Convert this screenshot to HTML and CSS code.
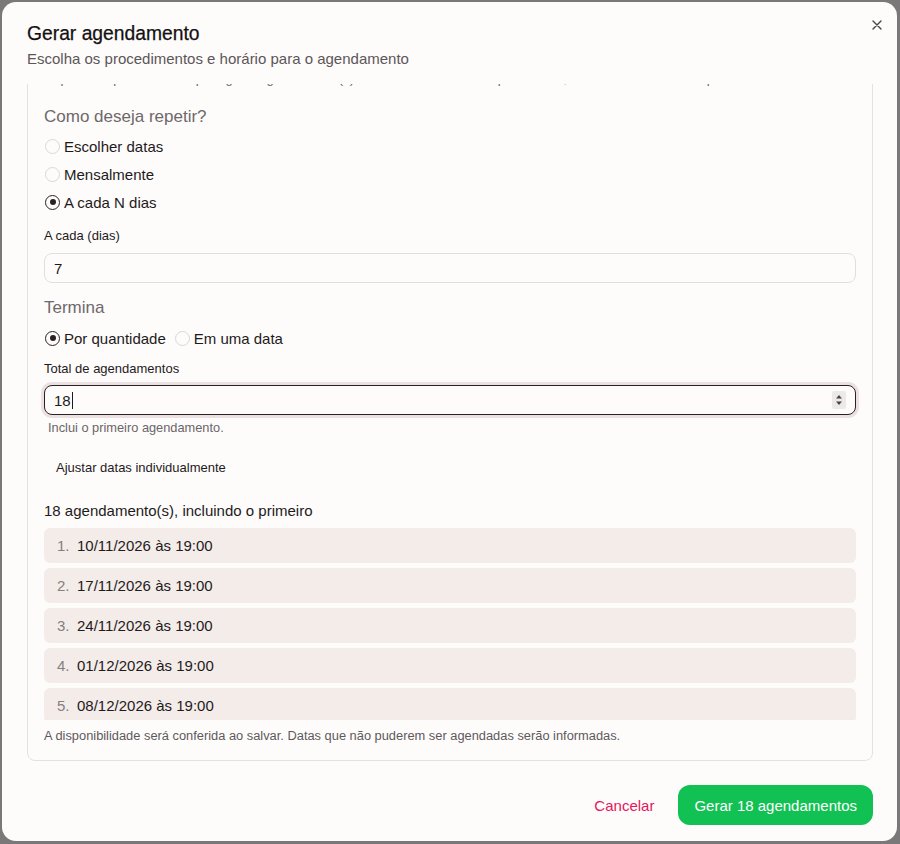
FILE: index.html
```html
<!DOCTYPE html>
<html lang="pt-BR">
<head>
    <meta charset="utf-8"/>
    <meta name="viewport" content="width=device-width, initial-scale=1.0"/>
    <title>Gerar agendamento</title>
    <link rel="stylesheet" href="styles.css">
</head>
<body>
<div class="modal">
    <button class="close" aria-label="Fechar">
        <svg width="10" height="10" viewBox="0 0 10 10"><path d="M1 1L9 9M9 1L1 9" stroke="#4a4446" stroke-width="1.4" stroke-linecap="round"/></svg>
    </button>

    <div class="header">
        <h2>Gerar agendamento</h2>
        <p>Escolha os procedimentos e horário para o agendamento</p>
    </div>

    <div class="scroll">
        <div class="card">
            <p class="intro">Repita este procedimento para gerar agendamento(s) com o mesmo horário e profissional, mantendo os dados do primeiro.</p>

            <h3>Como deseja repetir?</h3>
            <label class="radio"><span class="dot"></span>Escolher datas</label>
            <label class="radio"><span class="dot"></span>Mensalmente</label>
            <label class="radio"><span class="dot checked"></span>A cada N dias</label>

            <div class="field-label">A cada (dias)</div>
            <div class="input">7</div>

            <h3 class="termina">Termina</h3>
            <div class="radio-row">
                <label class="radio"><span class="dot checked"></span>Por quantidade</label>
                <label class="radio"><span class="dot"></span>Em uma data</label>
            </div>

            <div class="field-label second">Total de agendamentos</div>
            <div class="input focused">
                <span>18</span><span class="caret"></span>
                <svg class="spin" width="14" height="18" viewBox="0 0 14 18">
                    <rect width="14" height="18" rx="2" fill="#ebe9e9"/>
                    <path d="M4 7.5L7 4L10 7.5Z" fill="#4a4446"/>
                    <path d="M4 10.5L7 14L10 10.5Z" fill="#4a4446"/>
                </svg>
            </div>
            <div class="hint">Inclui o primeiro agendamento.</div>

            <button class="ghost">Ajustar datas individualmente</button>

            <div class="summary">18 agendamento(s), incluindo o primeiro</div>
            <ol class="dates">
                <li><span class="n">1.</span>10/11/2026 às 19:00</li>
                <li><span class="n">2.</span>17/11/2026 às 19:00</li>
                <li><span class="n">3.</span>24/11/2026 às 19:00</li>
                <li><span class="n">4.</span>01/12/2026 às 19:00</li>
                <li><span class="n">5.</span>08/12/2026 às 19:00</li>
            </ol>
            <div class="note">A disponibilidade será conferida ao salvar. Datas que não puderem ser agendadas serão informadas.</div>
        </div>
    </div>

    <div class="footer">
        <button class="cancel">Cancelar</button>
        <button class="primary">Gerar 18 agendamentos</button>
    </div>
</div>
</body>
</html>
```

FILE: styles.css
```css
* {
    box-sizing: border-box;
}

body {
    margin: 0;
    background-color: #7a7878;
    font-family: "Liberation Sans", Arial, sans-serif;
    color: #1f1a1c;
}

button {
    font-family: inherit;
    border: none;
    background: none;
    cursor: pointer;
}

.modal {
    position: relative;
    margin: 2px 3px 0 2px;
    height: 839px;
    background-color: #fdfcfb;
    border-radius: 14px;
    display: flex;
    flex-direction: column;
}

.close {
    position: absolute;
    top: 13px;
    right: 10px;
    width: 20px;
    height: 20px;
    padding: 0;
    display: flex;
    align-items: center;
    justify-content: center;
}

.header {
    padding: 20px 25px 0;
    margin-bottom: 15px;
}

.header h2 {
    margin: 0;
    font-size: 19.3px;
    line-height: 24px;
    font-weight: 500;
    color: #141012;
    -webkit-text-stroke: 0.25px #141012;
}

.header p {
    margin: 3px 0 0;
    font-size: 15px;
    line-height: 20px;
    color: #5c5658;
}

.scroll {
    flex: 1;
    min-height: 0;
    overflow: hidden;
    padding: 0 24px 0 25px;
}

.card {
    margin-top: -31px;
    border: 1px solid #e6e1df;
    border-radius: 8px;
    padding: 16px 16px 16px;
}

.intro {
    margin: 0;
    font-size: 13px;
    line-height: 18px;
    color: #6b6567;
    white-space: nowrap;
    overflow: hidden;
}

.card h3 {
    margin: 17px 0 3px;
    font-size: 17px;
    line-height: 24px;
    font-weight: normal;
    color: #6e686a;
}

.card h3.termina {
    margin: 13px 0 4px;
}

.radio {
    display: flex;
    align-items: center;
    gap: 4px;
    height: 28px;
    font-size: 15px;
    color: #1f1a1c;
}

.radio-row {
    display: flex;
    gap: 8px;
}

.dot {
    width: 15px;
    height: 15px;
    margin-left: 1px;
    border-radius: 50%;
    border: 1px solid #dcd7d5;
    background-color: #fdfcfb;
    display: flex;
    align-items: center;
    justify-content: center;
}

.dot.checked {
    border: 1.6px solid #2b2024;
}

.dot.checked::after {
    content: "";
    width: 6px;
    height: 6px;
    border-radius: 50%;
    background-color: #2b2024;
}

.field-label {
    margin-top: 11px;
    font-size: 13px;
    line-height: 18px;
    color: #1f1a1c;
}

.field-label.second {
    margin-top: 8px;
}

.input {
    position: relative;
    margin-top: 8px;
    height: 30px;
    display: flex;
    align-items: center;
    padding: 0 9px;
    border: 1px solid #e3dedc;
    border-radius: 8px;
    font-size: 15px;
    background-color: #fdfcfb;
}

.input.focused {
    margin-top: 7px;
    border: 1.5px solid #2b2024;
    box-shadow: 0 0 0 3px rgba(214, 190, 196, 0.45);
}

.caret {
    width: 1px;
    height: 17px;
    margin-left: 1px;
    background-color: #1f1a1c;
}

.spin {
    position: absolute;
    right: 9px;
    top: 5px;
}

.hint {
    margin-top: 5px;
    padding-left: 4px;
    font-size: 12.8px;
    line-height: 16px;
    color: #6b6567;
}

.ghost {
    display: block;
    margin-top: 15px;
    height: 32px;
    padding: 0 12px;
    font-size: 13px;
    color: #1f1a1c;
    border-radius: 8px;
}

.summary {
    margin-top: 18px;
    font-size: 15px;
    line-height: 20px;
}

.dates {
    list-style: none;
    margin: 7px 0 0;
    padding: 0;
    height: 192px;
    overflow: hidden;
    display: flex;
    flex-direction: column;
    gap: 5px;
}

.dates li {
    flex: none;
    height: 35px;
    display: flex;
    align-items: center;
    padding: 0 13px;
    background-color: #f3ece9;
    border-radius: 6px;
    font-size: 15px;
}

.dates .n {
    width: 20px;
    color: #857f81;
}

.note {
    margin-top: 8px;
    font-size: 12.85px;
    line-height: 16px;
    color: #5f595b;
}

.footer {
    display: flex;
    justify-content: flex-end;
    align-items: center;
    gap: 12px;
    padding: 24px 24px 16px;
}

.cancel {
    height: 40px;
    padding: 0 12px;
    font-size: 15px;
    color: #e3175c;
}

.primary {
    height: 40px;
    padding: 0 16px;
    border-radius: 12px;
    background-color: #12c153;
    color: #fff;
    font-size: 15px;
    font-weight: 500;
}
```
